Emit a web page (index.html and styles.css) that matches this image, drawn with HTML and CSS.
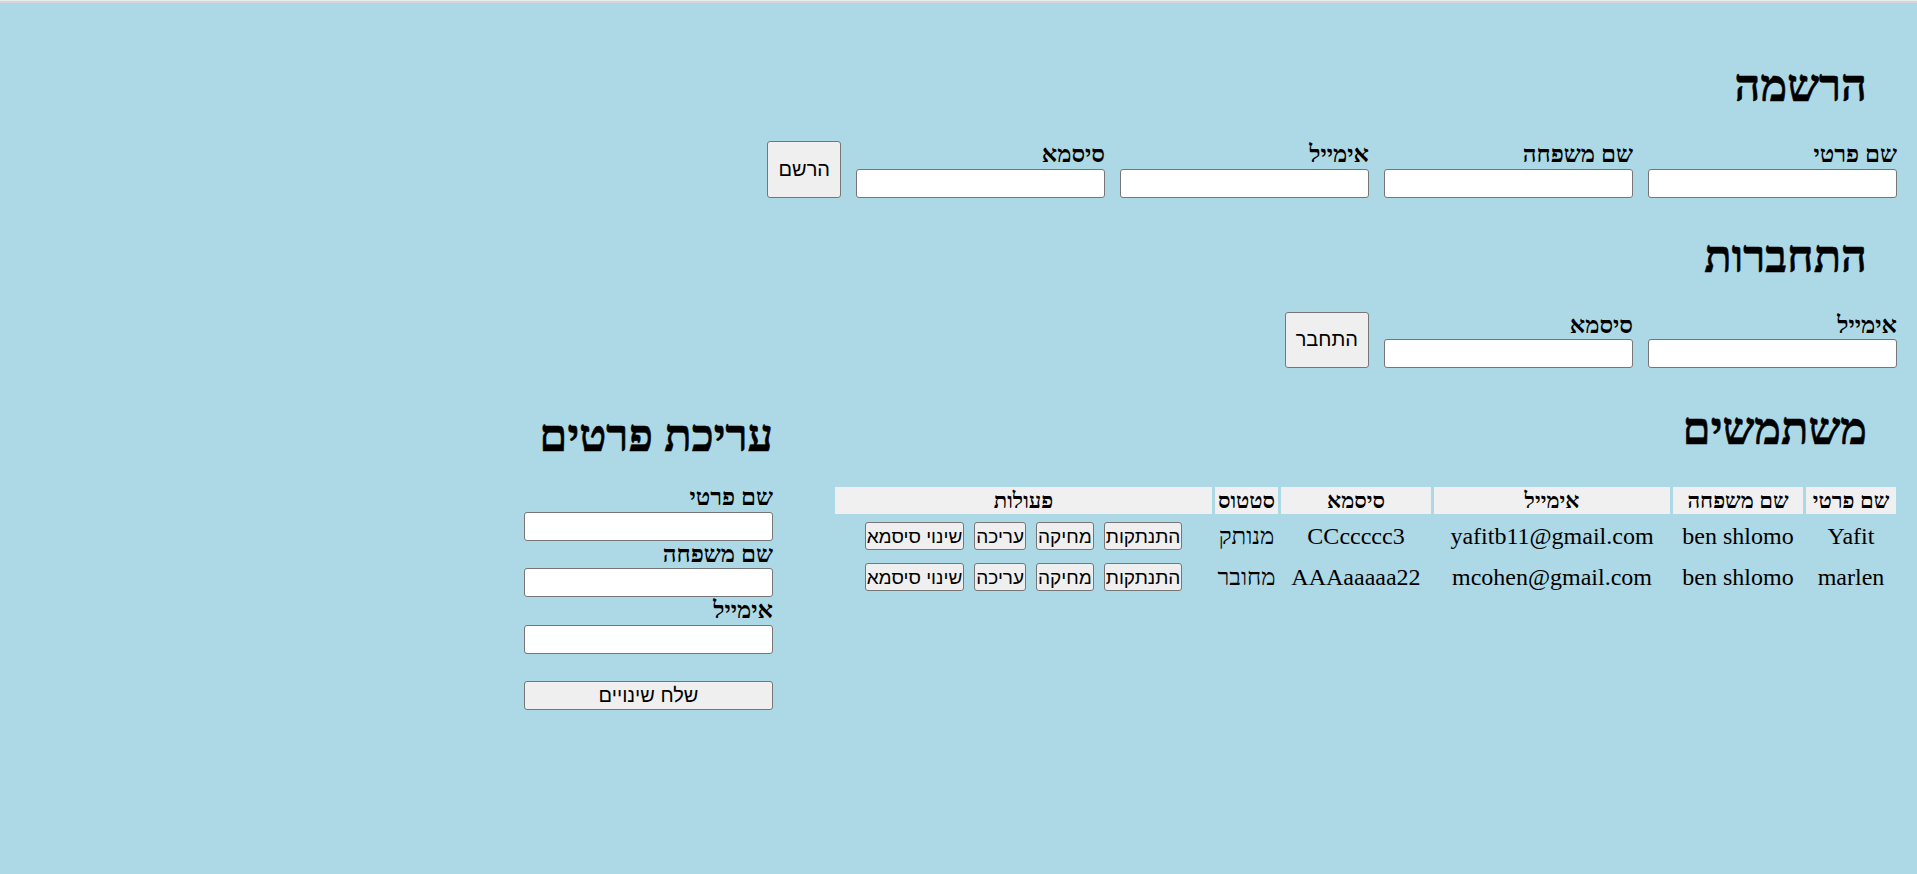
FILE: index.html
```html
<!DOCTYPE html>
<html lang="he" dir="rtl">
<head>
<meta charset="utf-8">
<title>ניהול משתמשים</title>
<link rel="stylesheet" href="styles.css">
</head>
<body>
<div class="topline"></div>
<main class="page">
  <section class="sec sec-register">
    <h1 class="title">הרשמה</h1>
    <form class="row-form">
      <div class="field"><label class="lbl">שם פרטי</label><input class="inp" type="text"></div>
      <div class="field"><label class="lbl">שם משפחה</label><input class="inp" type="text"></div>
      <div class="field"><label class="lbl">אימייל</label><input class="inp" type="text"></div>
      <div class="field"><label class="lbl">סיסמא</label><input class="inp" type="password"></div>
      <button class="btn btn-tall" type="button">הרשם</button>
    </form>
  </section>

  <section class="sec sec-login">
    <h1 class="title">התחברות</h1>
    <form class="row-form">
      <div class="field"><label class="lbl">אימייל</label><input class="inp" type="text"></div>
      <div class="field"><label class="lbl">סיסמא</label><input class="inp" type="password"></div>
      <button class="btn btn-tall" type="button">התחבר</button>
    </form>
  </section>

  <div class="bottom">
    <section class="users">
      <h1 class="title">משתמשים</h1>
      <table class="tbl">
        <colgroup>
          <col class="c-first"><col class="c-last"><col class="c-mail"><col class="c-pass"><col class="c-status"><col class="c-actions">
        </colgroup>
        <thead>
          <tr><th>שם פרטי</th><th>שם משפחה</th><th>אימייל</th><th>סיסמא</th><th>סטטוס</th><th>פעולות</th></tr>
        </thead>
        <tbody>
          <tr>
            <td>Yafit</td><td>ben shlomo</td><td>yafitb11@gmail.com</td><td>CCccccc3</td><td>מנותק</td>
            <td><div class="actions"><button class="btn btn-sm" type="button">התנתקות</button><button class="btn btn-sm" type="button">מחיקה</button><button class="btn btn-sm" type="button">עריכה</button><button class="btn btn-sm" type="button">שינוי סיסמא</button></div></td>
          </tr>
          <tr>
            <td>marlen</td><td>ben shlomo</td><td>mcohen@gmail.com</td><td>AAAaaaaa22</td><td>מחובר</td>
            <td><div class="actions"><button class="btn btn-sm" type="button">התנתקות</button><button class="btn btn-sm" type="button">מחיקה</button><button class="btn btn-sm" type="button">עריכה</button><button class="btn btn-sm" type="button">שינוי סיסמא</button></div></td>
          </tr>
        </tbody>
      </table>
    </section>

    <section class="edit">
      <h1 class="title title-edit">עריכת פרטים</h1>
      <form class="col-form">
        <label class="lbl">שם פרטי</label><input class="inp" type="text">
        <label class="lbl">שם משפחה</label><input class="inp" type="text">
        <label class="lbl">אימייל</label><input class="inp" type="text">
        <button class="btn btn-wide" type="button">שלח שינויים</button>
      </form>
    </section>
  </div>
</main>
</body>
</html>
```

FILE: styles.css
```css
* { box-sizing: border-box; }

html, body {
  margin: 0;
  padding: 0;
}

body {
  background: #add8e6;
  color: #000;
  font-family: "Liberation Serif", "Times New Roman", serif;
  font-size: 24px;
  min-height: 874px;
}

.topline {
  height: 3px;
  border-top: 1px solid #e6eef1;
  background: #d6d6d6;
}

.page {
  padding: 57px 20px 0 20px;
}

.title {
  margin: 0;
  font-size: 45px;
  font-weight: bold;
  line-height: 53px;
  padding-right: 30px;
  -webkit-text-stroke: 0.6px #000;
}

.sec { margin-bottom: 33px; }
.sec-login { margin-bottom: 35px; }

.row-form {
  display: flex;
  align-items: stretch;
  gap: 15px;
  margin-top: 28px;
}

.field {
  display: flex;
  flex-direction: column;
  width: 249px;
}

.lbl {
  display: block;
  font-weight: bold;
  font-size: 24px;
  line-height: 27.5px;
  text-align: right;
}

.inp {
  width: 249px;
  height: 29px;
  border: 1px solid #767676;
  border-radius: 3px;
  background: #fff;
  padding: 1px 3px;
  font-family: "Liberation Sans", Arial, sans-serif;
  font-size: 20px;
}

.btn {
  font-family: "Liberation Sans", Arial, sans-serif;
  font-size: 20px;
  line-height: 23px;
  color: #000;
  background: #efefef;
  border: 1px solid #767676;
  border-radius: 3px;
  padding: 1px 9px;
  height: 28px;
}

.btn-tall {
  height: auto;
  padding: 0 10px;
}

.btn-sm {
  font-size: 19px;
  padding: 0 1px;
}

.bottom {
  display: flex;
  align-items: flex-start;
  gap: 57px;
}

.users { width: 1067px; }

.tbl {
  table-layout: fixed;
  width: 1067px;
  border-spacing: 3px;
  margin-top: 28px;
  margin-right: -2px;
}

.c-first { width: 90px; }
.c-last { width: 130px; }
.c-mail { width: 236px; }
.c-pass { width: 150px; }
.c-status { width: 63px; }
.c-actions { width: 377px; }

.tbl th {
  background: #f0f0f0;
  font-weight: bold;
  font-size: 22px;
  line-height: 27px;
  padding: 0;
  text-align: center;
}

.tbl td {
  padding: 5px 0;
  text-align: center;
  line-height: 28px;
  white-space: nowrap;
}

.actions {
  display: flex;
  justify-content: center;
  gap: 10px;
}

.edit {
  width: 249px;
  margin-top: 7px;
}

.title-edit { padding-right: 0; white-space: nowrap; }

.col-form {
  display: flex;
  flex-direction: column;
  margin-top: 21px;
}

.btn-wide {
  width: 249px;
  height: 29px;
  margin-top: 27px;
}
```
